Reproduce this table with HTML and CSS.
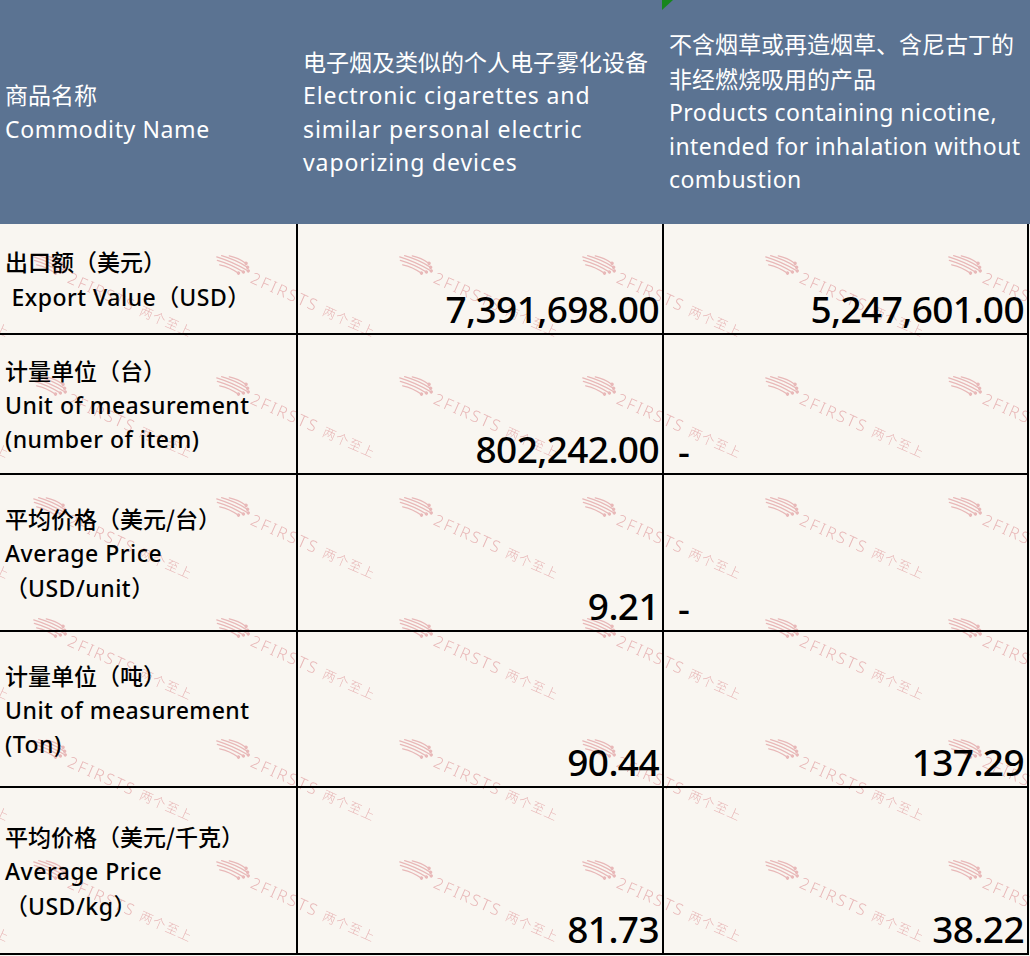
FILE: index.html
```html
<!DOCTYPE html>
<html lang="zh">
<head>
<meta charset="utf-8">
<title>Export table</title>
<link rel="stylesheet" href="styles.css">
</head>
<body>
<div class="sheet">
  <svg class="watermark" width="1030" height="956" viewBox="0 0 1030 956" aria-hidden="true">
    <defs>
      <pattern id="wm" x="20" y="243" width="183" height="121" patternUnits="userSpaceOnUse">
        <g transform="translate(10 10) rotate(24)" fill="#e8b8b8" stroke="#e8b8b8">
          <g stroke-width="1.3" stroke-linecap="round" fill="none">
            <path d="M16 -4 Q25 -6 34 -4"/>
            <path d="M9 -1 Q23 -3 37 -1"/>
            <path d="M5 2 Q22 0 39 2"/>
            <path d="M7 5 Q21 3 35 5"/>
            <path d="M11 8 Q21 6 31 8"/>
          </g>
          <g stroke="none">
            <circle cx="34.5" cy="-4" r="1.7"/>
            <circle cx="37.5" cy="-1" r="1.7"/>
            <circle cx="39.5" cy="2" r="1.7"/>
            <circle cx="35.5" cy="5" r="1.7"/>
            <circle cx="31.5" cy="8" r="1.7"/>
          </g>
          <text x="45" y="12" stroke="none" class="wm-text">2FIRSTS<tspan class="wm-zh" dx="6">两个至上</tspan></text>
        </g>
      </pattern>
    </defs>
    <rect x="0" y="224" width="1030" height="732" fill="url(#wm)"/>
  </svg>

  <div class="grid">
    <div class="hcell">
      <div class="htext"><span class="zh">商品名称</span><br>Commodity Name</div>
    </div>
    <div class="hcell hcell-wide">
      <div class="htext"><span class="zh">电子烟及类似的个人电子雾化设备</span><br>Electronic cigarettes and<br>similar personal electric<br>vaporizing devices</div>
    </div>
    <div class="hcell hcell-tight">
      <span class="marker"></span>
      <div class="htext"><span class="zh">不含烟草或再造烟草、含尼古丁的<br>非经燃烧吸用的产品</span><br>Products containing nicotine,<br>intended for inhalation without<br>combustion</div>
    </div>

    <div class="cell label"><div><span class="zh">出口额（美元）</span><br>&nbsp;Export Value<span class="zh">（</span>USD<span class="zh">）</span></div></div>
    <div class="cell num">7,391,698.00</div>
    <div class="cell num">5,247,601.00</div>

    <div class="cell label"><div><span class="zh">计量单位（台）</span><br>Unit of measurement<br>(number of item)</div></div>
    <div class="cell num">802,242.00</div>
    <div class="cell dash">-</div>

    <div class="cell label"><div><span class="zh">平均价格（美元/台）</span><br>Average Price<br><span class="zh">（</span>USD/unit<span class="zh">）</span></div></div>
    <div class="cell num">9.21</div>
    <div class="cell dash">-</div>

    <div class="cell label"><div><span class="zh">计量单位（吨）</span><br>Unit of measurement<br>(Ton)</div></div>
    <div class="cell num">90.44</div>
    <div class="cell num">137.29</div>

    <div class="cell label"><div><span class="zh">平均价格（美元/千克）</span><br>Average Price<br><span class="zh">（</span>USD/kg<span class="zh">）</span></div></div>
    <div class="cell num">81.73</div>
    <div class="cell num">38.22</div>
  </div>
</div>
</body>
</html>
```

FILE: styles.css
```css
html, body {
  margin: 0;
  padding: 0;
  background: #f9f6f1;
}

.sheet {
  position: relative;
  width: 1030px;
  height: 956px;
  overflow: hidden;
  background: linear-gradient(to bottom, #5b7392 0, #5b7392 224px, #f9f6f1 224px);
  font-family: "Noto Sans", "Noto Sans CJK SC", sans-serif;
}

.watermark {
  position: absolute;
  left: 0;
  top: 0;
  z-index: 0;
}

.wm-text {
  font-family: "Noto Sans", sans-serif;
  font-size: 16px;
  font-weight: 300;
  letter-spacing: 2.2px;
}

.wm-zh {
  font-family: "Noto Sans CJK SC", sans-serif;
  font-size: 13px;
  letter-spacing: 1px;
}

.grid {
  position: relative;
  z-index: 1;
  display: grid;
  grid-template-columns: 298px 366px 365px;
  grid-template-rows: 224px 111px 140px 157px 156px 167px;
}

.zh {
  font-family: "Noto Sans CJK SC", sans-serif;
  letter-spacing: 0;
}

.hcell {
  position: relative;
  background: #5b7392;
  color: #ffffff;
  display: flex;
  align-items: center;
  padding-left: 5px;
  font-size: 23px;
  line-height: 33.4px;
  letter-spacing: 0.6px;
  white-space: nowrap;
}

.hcell-wide {
  letter-spacing: 0.9px;
}

.hcell-tight {
  letter-spacing: 0.45px;
}

.marker {
  position: absolute;
  left: -2px;
  top: 0;
  width: 0;
  height: 0;
  border-top: 10px solid #17861c;
  border-right: 11px solid transparent;
}

.cell {
  box-sizing: border-box;
  border-right: 2px solid #000;
  border-bottom: 2px solid #000;
  color: #000;
  display: flex;
  white-space: nowrap;
}

.label {
  align-items: center;
  padding-left: 5px;
  font-size: 23px;
  line-height: 34px;
  font-weight: 500;
  letter-spacing: 0.5px;
}

.num {
  align-items: flex-end;
  justify-content: flex-end;
  padding-right: 3px;
  padding-bottom: 2px;
  font-size: 37px;
  line-height: 44px;
  font-weight: 500;
  letter-spacing: -0.6px;
}

.dash {
  align-items: flex-end;
  padding-left: 14px;
  padding-bottom: 0;
  font-size: 37px;
  line-height: 44px;
  font-weight: 500;
}
```
